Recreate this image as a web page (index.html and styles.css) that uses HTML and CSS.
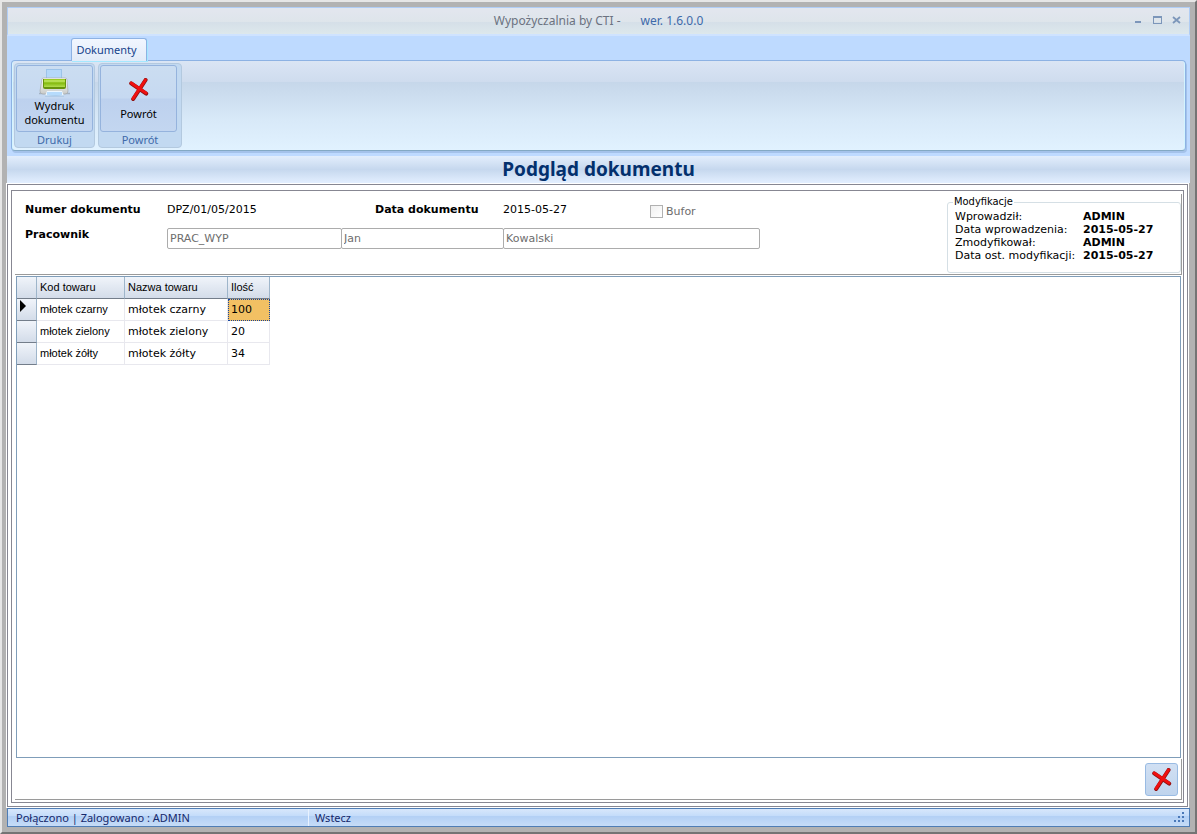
FILE: index.html
```html
<!DOCTYPE html>
<html lang="pl">
<head>
<meta charset="utf-8">
<title>Wypożyczalnia by CTI</title>
<link rel="stylesheet" href="styles.css">
</head>
<body>
<svg class="defs" aria-hidden="true">
  <symbol id="cross" viewBox="0 0 20 23">
    <path d="M2.2 5.3 L17.2 15.6" stroke="#8f1010" stroke-width="4" stroke-linecap="round"/>
    <path d="M16.6 2 L4.2 21" stroke="#8f1010" stroke-width="4" stroke-linecap="round"/>
    <path d="M2.2 5 L17 15" stroke="#f01010" stroke-width="2.8" stroke-linecap="round"/>
    <path d="M16.4 2 L4 20.6" stroke="#f01010" stroke-width="2.8" stroke-linecap="round"/>
  </symbol>
</svg>
<div class="window">
  <header class="titlebar">
    <span></span>
    <div class="caption"><span>Wypożyczalnia by CTI -</span><span class="version">wer. 1.6.0.0</span></div>
    <div class="window-controls">
      <button type="button" aria-label="Minimalizuj"><svg width="9" height="9"><rect x="1" y="5" width="6" height="2" fill="#7c96ba"/></svg></button>
      <button type="button" aria-label="Maksymalizuj"><svg width="9" height="9"><path d="M0 0h9v8H0zM1 2v5h7V2z" fill="#7c96ba" fill-rule="evenodd"/></svg></button>
      <button type="button" aria-label="Zamknij"><svg width="9" height="9"><path d="M1 1L8 7M8 1L1 7" stroke="#7c96ba" stroke-width="1.8"/></svg></button>
    </div>
  </header>

  <div class="ribbon">
    <div class="tabs" role="tablist"><button type="button" class="tab" role="tab" aria-selected="true">Dokumenty</button></div>
    <div class="ribbon-panel">
      <section class="group">
        <button type="button" class="tool">
          <svg width="31" height="28" viewBox="0 0 31 28" aria-hidden="true">
            <defs>
              <linearGradient id="lid" x2="0" y2="1"><stop offset="0" stop-color="#8cc10c"/><stop offset=".25" stop-color="#c4ea68"/><stop offset=".5" stop-color="#83b90c"/><stop offset="1" stop-color="#b2dd50"/></linearGradient>
              <linearGradient id="case" x2="0" y2="1"><stop offset="0" stop-color="#fff"/><stop offset="1" stop-color="#c9cbc8"/></linearGradient>
            </defs>
            <rect x="7.500" y=".5" width="15" height="12" fill="#b5d8f9" stroke="#9cc3e9"/>
            <path d="M0 24.500h31" stroke="#a3b3c4" stroke-width="1.500"/>
            <path d="M3 10 Q3 9 5 9 H26 Q28 9 28 11 L29 22 Q29 25 26 25 H4 Q1 25 1 22Z" fill="url(#case)" stroke="#a6aaac" stroke-width=".7"/>
            <path d="M4 10h23v8q0 2-2 2H6q-2 0-2-2z" fill="#67930d"/>
            <rect x="5" y="10" width="21" height="8" fill="url(#lid)"/>
            <path d="M8 22h15l2 5H6z" fill="#edf7ff"/>
            <path d="M8 23h15v3q-5 2-15 0z" fill="#b6dbfc"/>
            <path d="M6 27h19" stroke="#9fc0e0"/>
          </svg>
          <span>Wydruk<br>dokumentu</span>
        </button>
        <div class="group-name">Drukuj</div>
      </section>
      <section class="group">
        <button type="button" class="tool">
          <svg class="tool-cross" width="20" height="23" aria-hidden="true"><use href="#cross"/></svg>
          <span>Powrót</span>
        </button>
        <div class="group-name">Powrót</div>
      </section>
    </div>
  </div>

  <h1 class="heading">Podgląd dokumentu</h1>

  <main class="outer">
    <div class="inner">
      <form class="details">
        <div class="fields">
          <div class="line">
            <b class="label">Numer dokumentu</b><span class="number">DPZ/01/05/2015</span>
            <b class="date-label">Data dokumentu</b><span class="date">2015-05-27</span>
            <span class="buffer"><input type="checkbox" id="bufor" disabled><label for="bufor">Bufor</label></span>
          </div>
          <div class="line">
            <label class="label" for="kod">Pracownik</label>
            <div class="employee">
              <input type="text" id="kod" value="PRAC_WYP" disabled>
              <input type="text" aria-label="Imię" value="Jan" disabled>
              <input type="text" aria-label="Nazwisko" value="Kowalski" disabled>
            </div>
          </div>
        </div>
        <fieldset class="changes">
          <legend>Modyfikacje</legend>
          <dl>
            <dt>Wprowadził:</dt><dd>ADMIN</dd>
            <dt>Data wprowadzenia:</dt><dd>2015-05-27</dd>
            <dt>Zmodyfikował:</dt><dd>ADMIN</dd>
            <dt>Data ost. modyfikacji:</dt><dd>2015-05-27</dd>
          </dl>
        </fieldset>
      </form>

      <div class="grid">
        <table>
          <colgroup><col class="c-mark"><col class="c-code"><col class="c-name"><col class="c-qty"></colgroup>
          <thead><tr><th></th><th>Kod towaru</th><th>Nazwa towaru</th><th>Ilość</th></tr></thead>
          <tbody>
            <tr><th><svg width="7" height="12" aria-hidden="true"><path d="M0 0L6 6L0 12z"/></svg></th><td>młotek czarny</td><td>młotek czarny</td><td class="selected">100</td></tr>
            <tr><th></th><td>młotek zielony</td><td>młotek zielony</td><td>20</td></tr>
            <tr><th></th><td>młotek żółty</td><td>młotek żółty</td><td>34</td></tr>
          </tbody>
        </table>
      </div>

      <div class="actions">
        <button type="button" class="close" aria-label="Powrót"><svg width="20" height="23" aria-hidden="true"><use href="#cross"/></svg></button>
      </div>
    </div>
  </main>

  <footer class="status">
    <span class="connection">Połączono | Zalogowano : ADMIN</span>
    <span class="hint">Wstecz</span>
    <svg class="grip" width="12" height="12" aria-hidden="true"><path d="M8 0h2v2h-2zM4 4h2v2h-2zM8 4h2v2h-2zM0 8h2v2h-2zM4 8h2v2h-2zM8 8h2v2h-2z" fill="#4a78b8"/></svg>
  </footer>
</div>
</body>
</html>
```
FILE: styles.css
```css
* { box-sizing: border-box; }

body {
  margin: 0;
  color: #000;
  font: 11px/14px "DejaVu Sans", Verdana, sans-serif;
}

button { padding: 0; font: inherit; color: inherit; }
svg { display: block; }
.defs { position: absolute; width: 0; height: 0; }

.window {
  display: flex;
  flex-direction: column;
  min-height: 100vh;
  padding: 5px;
  background: #b2b2b2;
  border: 2px solid;
  border-color: #e6e6e6 #747474 #747474 #e6e6e6;
}

/* Title bar */
.titlebar {
  display: grid;
  grid-template-columns: 1fr auto 1fr;
  align-items: center;
  height: 29px;
  border: 1px solid #b0cdf5;
  border-bottom: 2px solid #cfe3ff;
  background: linear-gradient(#e2e6ee 0 10%, #dee5eb 52%, #d5dfe8 54%, #dde8ec);
  font: 12px/16px "Noto Sans", "Segoe UI", sans-serif;
  color: #6b7280;
}
.caption { display: flex; gap: 20px; }
.version { color: #3e6aaa; }
.window-controls { display: flex; justify-content: flex-end; gap: 10px; padding: 0 8px 2px 0; }
.window-controls button { border: 0; background: none; }

/* Ribbon */
.ribbon { padding: 2px 4px 5px; background: #bedaff; }
.tabs { display: flex; padding-left: 60px; }
.tab {
  height: 23px;
  width: 76px;
  padding-right: 5px;
  margin-bottom: -1px;
  border: 1px solid #8db2e3;
  border-bottom: 0;
  border-radius: 3px 3px 0 0;
  background: linear-gradient(#f1f6ff, #e2ebf8);
  box-shadow: 1px 1px #a4e8ff;
  color: #15428b;
  font: 11px/14px "Noto Sans", "Segoe UI", sans-serif;
  z-index: 1;
}
.ribbon-panel {
  display: flex;
  gap: 3px;
  height: 91px;
  padding: 2px;
  border: 1px solid #8db2e3;
  border-bottom-color: #83a9c4;
  border-radius: 4px;
  background: linear-gradient(#dae5f4, #cfdcee 23%, #c6d7ea 24%, #d8e9f8 66%, #e1f2ff);
  box-shadow: inset 1px 0 #d3f4ff, inset -1px 0 #d3f4ff, 1px 2px #a4c2ea;
}
.group {
  width: 81px;
  height: 85px;
  padding: 1px;
  border: 1px solid #b3c9df;
  border-radius: 4px;
  background: #c2d9f1;
}
.group + .group { width: 84px; }
.tool {
  display: flex;
  flex-direction: column;
  align-items: center;
  justify-content: flex-end;
  width: 77px;
  height: 67px;
  padding-bottom: 4px;
  gap: 2px;
  border: 1px solid #95b3dd;
  border-radius: 3px;
  background: linear-gradient(#cbddf1, #c6d9f1 49%, #bdd1ee 51%, #c3d6f0);
  font: 11px/14px "Noto Sans", "Segoe UI", sans-serif;
}
.group + .group .tool { gap: 6px; padding-bottom: 10px; }
.group-name {
  color: #3e6aaa;
  font: 11px/15px "Noto Sans", "Segoe UI", sans-serif;
  text-align: center;
}

.heading {
  margin: 0;
  height: 27px;
  background: linear-gradient(#e3eefc, #c6d8ee 50%, #e3efff);
  color: #03306d;
  font: bold 19px/26px "Noto Sans", Tahoma, sans-serif;
  text-align: center;
}

/* Document frame */
.outer {
  display: flex;
  flex: 1;
  padding: 5px 3px 3px;
  border: 1px solid #878792;
  outline: 1px solid #fff;
  margin: 1px 2px 1px 0;
}
.outer, .inner { background: #fff; }
.inner {
  display: flex;
  flex: 1;
  flex-direction: column;
  min-width: 0;
  padding: 3px 1px 2px 3px;
  border: 1px solid #878792;
}

.details {
  display: flex;
  justify-content: space-between;
  height: 81px;
  margin: 0;
  border-right: 1px solid #9a9a9a;
  border-bottom: 1px solid #9a9a9a;
}
.fields { padding: 9px 0 0 10px; }
.line { display: flex; height: 25px; }
.label { width: 142px; font-weight: bold; }
.number { width: 208px; }
.date-label { width: 128px; }
.date { width: 147px; }
.buffer { display: flex; gap: 3px; padding-top: 2px; color: #6d6d6d; }
.buffer input {
  appearance: none;
  width: 13px;
  height: 13px;
  margin: 0;
  border: 1px solid #b1b1b1;
  background: linear-gradient(135deg, #f0f0f0, #fff);
}
.employee { display: flex; }
.employee input {
  width: 175px;
  height: 21px;
  padding: 0 2px;
  border: 1px solid #acacac;
  border-radius: 2px;
  background: #fff;
  color: #6d6d6d;
  font: inherit;
}
.employee input + input { width: 163px; margin-left: -1px; }
.employee input + input + input { width: 257px; }

.changes {
  width: 234px;
  height: 78px;
  margin: 1px 0 0;
  padding: 1px 7px 0;
  border: 1px solid #d5dfe5;
  border-radius: 3px;
}
.changes legend {
  margin-left: -2px;
  padding: 0 1px;
  font: 11px/14px "DejaVu Sans Condensed", Tahoma, sans-serif;
}
.changes dl {
  display: grid;
  grid-template-columns: 128px 1fr;
  margin: 0;
  line-height: 13px;
  white-space: nowrap;
}
.changes dd { margin: 0; font-weight: bold; }

/* Item table */
.grid {
  flex: 1;
  margin: 1px 1px 1px 1px;
  border: 1px solid #7f9db9;
}
table { width: 253px; table-layout: fixed; border-spacing: 0; }
.c-mark { width: 20px; }
.c-code { width: 88px; }
.c-name { width: 103px; }
.c-qty { width: 42px; }
th, td {
  height: 22px;
  padding: 1px 0 0 3px;
  border: solid #e8e8ee;
  border-width: 0 1px 1px 0;
  text-align: left;
  font-weight: normal;
  white-space: nowrap;
}
th {
  border-right-color: #9eb5ca;
  border-bottom-color: #737d8a;
  background: linear-gradient(#f0f4fa, #d3dce9);
  font: 11px/14px "Liberation Sans", Arial, sans-serif;
}
thead th, td:nth-child(2) { padding: 0 0 1px 3px; }
tbody th { vertical-align: top; }
td:nth-child(2) { font: 11px/14px "Liberation Sans", Arial, sans-serif; }
.selected { background: #f2c063; border: 1px dotted #1745a0; padding: 0 0 0 2px; }

.actions {
  display: flex;
  justify-content: flex-end;
  height: 41px;
  padding: 4px 3px 3px;
  border-right: 1px solid #9a9a9a;
  border-bottom: 1px solid #9a9a9a;
}
.close {
  display: grid;
  place-items: center;
  width: 33px;
  height: 33px;
  border: 1px solid #99bbe3;
  border-radius: 3px;
  background: linear-gradient(#d1e0f3, #bfd4ed);
}

.status {
  display: flex;
  align-items: center;
  height: 19px;
  padding: 0 3px 0 8px;
  border: 1px solid #4f7db5;
  background: linear-gradient(#d8e7fb, #c4dcfa 40%, #b3d0f5 44%, #c6dcf7);
  color: #15286b;
  font: 11px/17px "Noto Sans", "Segoe UI", sans-serif;
}
.connection { width: 293px; border-right: 1px solid #e8f2ff; }
.hint { flex: 1; padding-left: 6px; }
```
